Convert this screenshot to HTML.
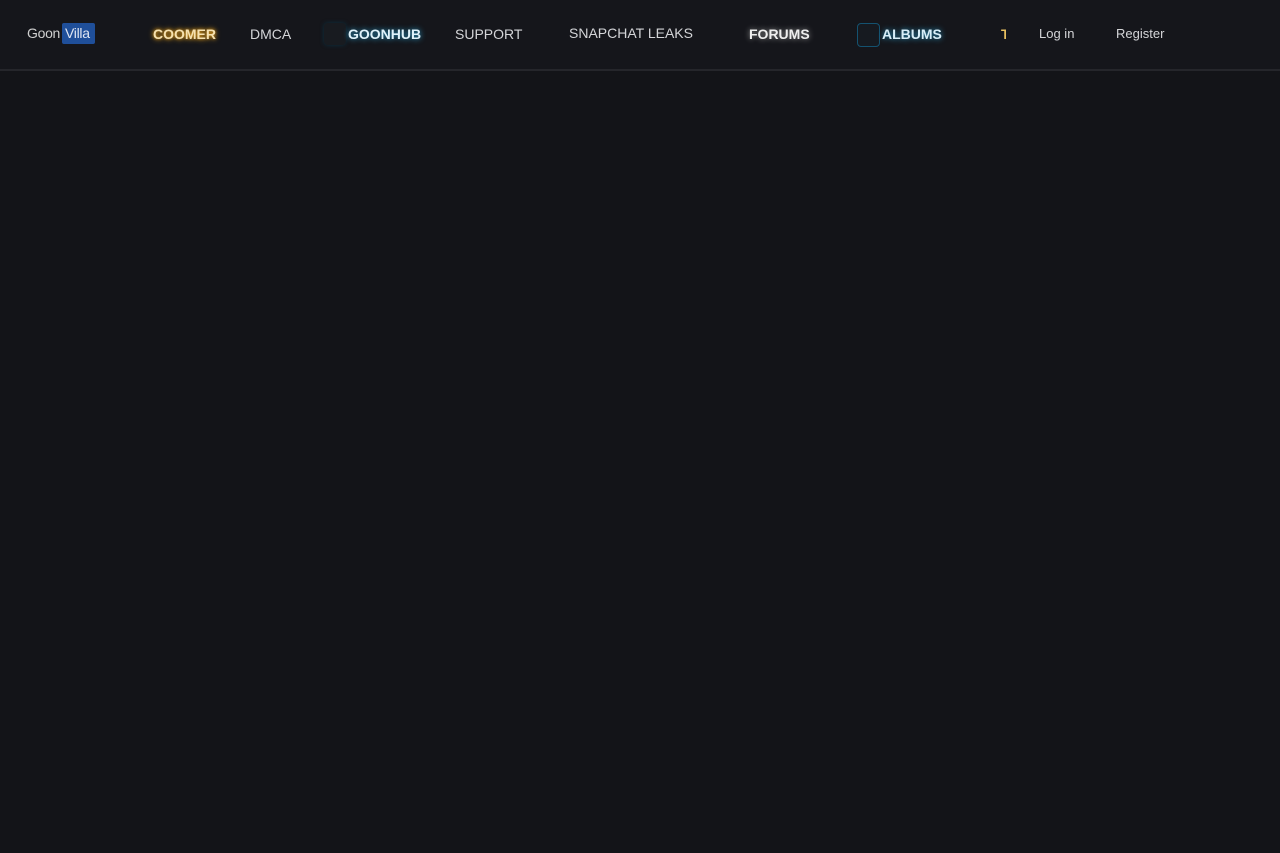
<!DOCTYPE html>
<html><head><style>
body{margin:0;background:#131418;width:1280px;height:853px;overflow:hidden;font-family:"Liberation Sans",sans-serif}
.hdr{position:absolute;left:0;top:0;width:1280px;height:69px;background:#15161b;border-bottom:2px solid #25262b}
.t{position:absolute;top:26px;font-size:14px;white-space:nowrap;color:#d4d5d8}
.b{font-weight:bold}
</style></head><body>
<div class="hdr">
<div class="t" style="left:27px;top:25px;color:#cfcfcf;font-size:14px;letter-spacing:-0.3px">Goon</div>
<div style="position:absolute;left:62px;top:23px;width:33px;height:21px;background:#1f4f9a;border-radius:2px"></div>
<div class="t" style="left:65px;top:25px;color:#dfe6f3;font-size:14px;letter-spacing:-0.3px">Villa</div>
<div class="t b" style="left:153px;color:#f5e1b0;text-shadow:0 0 6px #e0a020,0 0 3px #c08010">COOMER</div>
<div class="t" style="left:250px">DMCA</div>
<div style="position:absolute;left:324px;top:23px;width:22px;height:22px;background:#181b20;border-radius:4px;box-shadow:0 0 4px #0c3040"></div>
<div class="t b" style="left:348px;color:#e0f2fa;text-shadow:0 0 6px #2aa0d0">GOONHUB</div>
<div class="t" style="left:455px">SUPPORT</div>
<div class="t" style="left:569px;top:25px">SNAPCHAT LEAKS</div>
<div class="t b" style="left:749px;color:#eee;text-shadow:0 0 6px #999">FORUMS</div>
<div style="position:absolute;left:857px;top:23px;width:21px;height:22px;border:1px solid #145270;border-radius:4px;background:#161a20"></div>
<div class="t b" style="left:882px;color:#d8eef8;text-shadow:0 0 6px #2a9ac8">ALBUMS</div>
<div class="t b" style="left:1001px;width:5px;overflow:hidden;color:#e8c060">T</div>
<div class="t" style="left:1039px;font-size:13px;top:26px">Log in</div>
<div class="t" style="left:1116px;font-size:13px;top:26px">Register</div>
</div>
</body></html>
